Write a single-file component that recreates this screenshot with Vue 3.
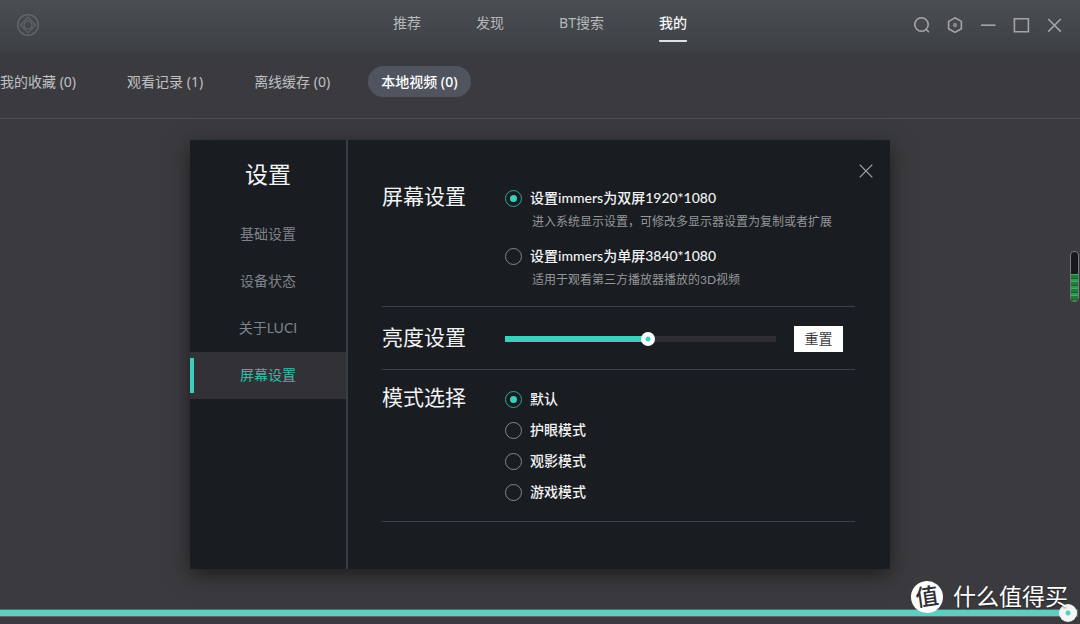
<script setup>
import { ref } from 'vue'

const nav = ['推荐', '发现', 'BT搜索', '我的']
const activeNav = ref('我的')

const tabs = ['我的收藏 (0)', '观看记录 (1)', '离线缓存 (0)', '本地视频 (0)']
const activeTab = ref('本地视频 (0)')

const menu = ['基础设置', '设备状态', '关于LUCI', '屏幕设置']
const activeMenu = ref('屏幕设置')

const screens = [
  { id: 'dual', label: '设置immers为双屏1920*1080', note: '进入系统显示设置，可修改多显示器设置为复制或者扩展' },
  { id: 'single', label: '设置immers为单屏3840*1080', note: '适用于观看第三方播放器播放的3D视频' },
]
const screen = ref('dual')

const modes = ['默认', '护眼模式', '观影模式', '游戏模式']
const mode = ref('默认')

const brightness = ref(53)
const progress = ref(100)
</script>

<template>
  <div class="app">
    <header class="topbar">
      <svg class="logo" viewBox="0 0 24 24" fill="none" stroke="currentColor" aria-hidden="true">
        <circle cx="12" cy="12" r="10.3" stroke-width="1.3" />
        <path d="M12 4.2 19.8 12 12 19.8 4.2 12Z" stroke-width="1.1" />
        <path d="M12 7.8 14.9 9.1 16.2 12 14.9 14.9 12 16.2 9.1 14.9 7.8 12 9.1 9.1Z" stroke-width="1.1" />
      </svg>
      <nav class="nav">
        <a
          v-for="item in nav"
          :key="item"
          href="#"
          :class="{ active: item === activeNav }"
          @click.prevent="activeNav = item"
        >{{ item }}</a>
      </nav>
      <div class="window-tools">
        <button type="button" aria-label="搜索">
          <svg viewBox="0 0 20 20"><circle cx="9.5" cy="9.5" r="6.7" /><path d="m14 14.2 3 3" /></svg>
        </button>
        <button type="button" aria-label="设置">
          <svg viewBox="0 0 20 20"><path d="M10 2.8 16.4 6.4v7.4L10 17.4 3.6 13.8V6.4Z" /><circle class="solid" cx="10" cy="10" r="2.2" /></svg>
        </button>
        <button type="button" aria-label="最小化">
          <svg viewBox="0 0 20 20"><path d="M3 10.2h14.4" /></svg>
        </button>
        <button type="button" aria-label="最大化">
          <svg viewBox="0 0 20 20"><path d="M3.4 3.8h14v13h-14Z" /></svg>
        </button>
        <button type="button" aria-label="关闭">
          <svg viewBox="0 0 20 20"><path d="m4.2 4 12.6 12.6M16.8 4 4.2 16.6" /></svg>
        </button>
      </div>
    </header>

    <div class="tabs">
      <button
        v-for="tab in tabs"
        :key="tab"
        type="button"
        :class="{ active: tab === activeTab }"
        @click="activeTab = tab"
      >{{ tab }}</button>
    </div>

    <main class="stage">
      <section class="dialog" role="dialog" aria-labelledby="dialog-title">
        <aside class="side">
          <h1 id="dialog-title">设置</h1>
          <button
            v-for="item in menu"
            :key="item"
            type="button"
            :class="{ active: item === activeMenu }"
            @click="activeMenu = item"
          >{{ item }}</button>
        </aside>
        <div class="body">
          <button class="close" type="button" aria-label="关闭设置">
            <svg viewBox="0 0 14 14"><path d="M.7.7 13.3 13.3M13.3.7.7 13.3" /></svg>
          </button>

          <div class="group screen-group">
            <h2>屏幕设置</h2>
            <div class="options">
              <div v-for="s in screens" :key="s.id">
                <label class="option">
                  <input v-model="screen" type="radio" name="screen" :value="s.id" />
                  {{ s.label }}
                </label>
                <p>{{ s.note }}</p>
              </div>
            </div>
          </div>

          <div class="group brightness-group">
            <h2 id="brightness-title">亮度设置</h2>
            <div class="brightness">
              <input
                v-model="brightness"
                class="slider"
                type="range"
                min="0"
                max="100"
                aria-labelledby="brightness-title"
                :style="{ '--fill': brightness + '%' }"
              />
              <button class="reset" type="button" @click="brightness = 53">重置</button>
            </div>
          </div>

          <div class="group mode-group">
            <h2>模式选择</h2>
            <div class="options modes">
              <label v-for="m in modes" :key="m" class="option">
                <input v-model="mode" type="radio" name="mode" :value="m" />
                {{ m }}
              </label>
            </div>
          </div>
        </div>
      </section>
    </main>

    <div class="meter" aria-hidden="true"><span></span></div>

    <div class="brand">
      <span class="badge">值</span>
      <span>什么值得买</span>
    </div>

    <input
      v-model="progress"
      class="slider player"
      type="range"
      min="0"
      max="100"
      aria-label="播放进度"
      :style="{ '--fill': progress + '%' }"
    />
  </div>
</template>

<style>
body {
  background: #3b3b3f;
}
</style>

<style scoped>
.app {
  position: relative;
  display: flex;
  flex-direction: column;
  min-height: 100vh;
  overflow: hidden;
  color: #f2f3f4;
  font-family: "Noto Sans", "Noto Sans CJK SC", sans-serif;
  font-size: 14px;
  background: linear-gradient(#4a4d51, #3f4246 44px, #3b3b3f 56px);
}

* {
  box-sizing: border-box;
}

button {
  margin: 0;
  padding: 0;
  border: 0;
  background: none;
  color: inherit;
  font: inherit;
  cursor: pointer;
}

h1,
h2,
p {
  margin: 0;
  font-weight: 400;
}

svg {
  display: block;
}

.topbar {
  display: grid;
  grid-template-columns: 1fr auto 1fr;
  align-items: center;
  height: 50px;
  padding: 0 16px;
}

.logo {
  width: 24px;
  height: 24px;
  color: #65686c;
}

.nav {
  display: flex;
  gap: 55px;
}

.nav a {
  padding: 4px 0 6px;
  border-bottom: 2px solid transparent;
  border-radius: 1px;
  color: #b5b8bb;
  line-height: 22px;
  text-decoration: none;
}

.nav a.active {
  border-color: #e0e1e2;
  color: #f4f5f6;
  font-weight: 500;
}

.window-tools {
  display: flex;
  justify-content: flex-end;
  gap: 13px;
}

.window-tools svg {
  width: 20px;
  height: 20px;
  fill: none;
  stroke: #a4a5a8;
  stroke-width: 1.6;
}

.window-tools .solid {
  fill: #85878a;
  stroke: none;
}

.tabs {
  display: flex;
  gap: 25px;
  margin-left: -13px;
  padding: 16px 0 21px;
  color: #bfc0c3;
}

.tabs button {
  padding: 0 13px;
  border-radius: 16px;
  line-height: 31px;
}

.tabs .active {
  background: #4f545e;
  color: #fff;
  font-weight: 500;
}

.stage {
  flex: 1;
  padding: 21px 24px 48px;
  border-top: 1px solid #4c4d51;
}

.dialog {
  display: grid;
  grid-template-columns: 158px 1fr;
  max-width: 700px;
  margin: 0 auto;
  background: #191c20;
  box-shadow: 0 6px 20px rgba(0, 0, 0, 0.5);
  font-family: Lato, "Noto Sans CJK SC", sans-serif;
}

.side {
  display: flex;
  flex-direction: column;
  border-right: 2px solid #393c45;
}

.side h1 {
  margin: 17px 0 20px;
  font-size: 23px;
  line-height: 34px;
  text-align: center;
}

.side button {
  position: relative;
  height: 47px;
  padding-bottom: 4px;
  color: #7e828c;
}

.side .active {
  background: #313136;
  color: #34bda9;
}

.side .active::before {
  content: "";
  position: absolute;
  top: 6px;
  bottom: 6px;
  left: 0;
  width: 4px;
  background: #3bd0bb;
}

.body {
  position: relative;
  padding: 46px 35px 47px 34px;
}

.close {
  position: absolute;
  top: 24px;
  right: 17px;
}

.close svg {
  width: 14px;
  height: 14px;
  fill: none;
  stroke: #a5a7aa;
  stroke-width: 1.2;
}

.group {
  display: grid;
  grid-template-columns: 123px 1fr;
  border-bottom: 1px solid #3c404a;
}

.group h2 {
  font-size: 21px;
  line-height: 20px;
}

.screen-group {
  padding-bottom: 14px;
}

.brightness-group {
  align-items: center;
  height: 63px;
  padding-bottom: 3px;
}

.mode-group {
  padding: 17px 0;
}

.options {
  display: grid;
  gap: 10px;
}

.modes {
  gap: 7px;
}

.option {
  display: flex;
  align-items: center;
  gap: 8px;
  font-weight: 500;
  line-height: 24px;
}

.option input {
  display: grid;
  place-items: center;
  appearance: none;
  width: 17px;
  height: 17px;
  margin: 0;
  border: 1px solid #85878a;
  border-radius: 50%;
}

.option input:checked {
  border-color: #2fa898;
}

.option input:checked::before {
  content: "";
  width: 7px;
  height: 7px;
  border-radius: 50%;
  background: #3bd0bb;
}

.options p {
  padding-left: 27px;
  color: #95979a;
  font-size: 12px;
  line-height: 24px;
}

.brightness {
  display: flex;
  align-items: center;
  gap: 18px;
  padding: 5px 12px 0 0;
}

.slider {
  appearance: none;
  flex: 1;
  min-width: 0;
  height: 6px;
  margin: 0;
  background: linear-gradient(#3bd0bb, #3bd0bb) 0 / var(--fill) 100% no-repeat #2e2e32;
}

.slider::-webkit-slider-thumb {
  appearance: none;
  width: 14px;
  height: 14px;
  border-radius: 50%;
  background: radial-gradient(circle, #3bd0bb 2px, #fff 3px);
}

.reset {
  width: 49px;
  background: #fff;
  color: #3c3e42;
  line-height: 26px;
}

.meter {
  position: absolute;
  top: 251px;
  right: 1px;
  display: flex;
  align-items: flex-end;
  width: 9px;
  height: 51px;
  border: 1px solid #77787b;
  border-radius: 4px;
  background: #17181b;
  overflow: hidden;
}

.meter span {
  width: 100%;
  height: 27px;
  background: repeating-linear-gradient(#39b45c 0 1px, #1f7a3c 1px 4px, #16642f 4px 5px, #2c9a4d 5px 7px);
}

.brand {
  position: absolute;
  right: 12px;
  bottom: 11px;
  z-index: 4;
  display: flex;
  align-items: center;
  gap: 10px;
  color: #fff;
  font-family: "Noto Sans CJK SC", sans-serif;
  font-size: 23px;
  line-height: 28px;
  text-shadow: 0 1px 2px rgba(0, 0, 0, 0.5);
  pointer-events: none;
}

.brand > :last-child {
  padding-bottom: 4px;
}

.badge {
  width: 32px;
  height: 32px;
  border-radius: 50%;
  background: #fff;
  color: #303135;
  font-weight: 500;
  text-align: center;
  text-shadow: none;
  transform: rotate(-8deg);
}

.player {
  position: absolute;
  right: 3px;
  bottom: 8px;
  left: 0;
  z-index: 3;
  height: 6px;
  background-color: #55565a;
  background-image: linear-gradient(#5bcfc0, #5bcfc0);
  box-shadow: 0 0 0 1px #55686a;
}

.player::-webkit-slider-thumb {
  width: 18px;
  height: 18px;
  background: radial-gradient(circle, #5bcfc0 2px, #f4f5f5 3px);
}
</style>
